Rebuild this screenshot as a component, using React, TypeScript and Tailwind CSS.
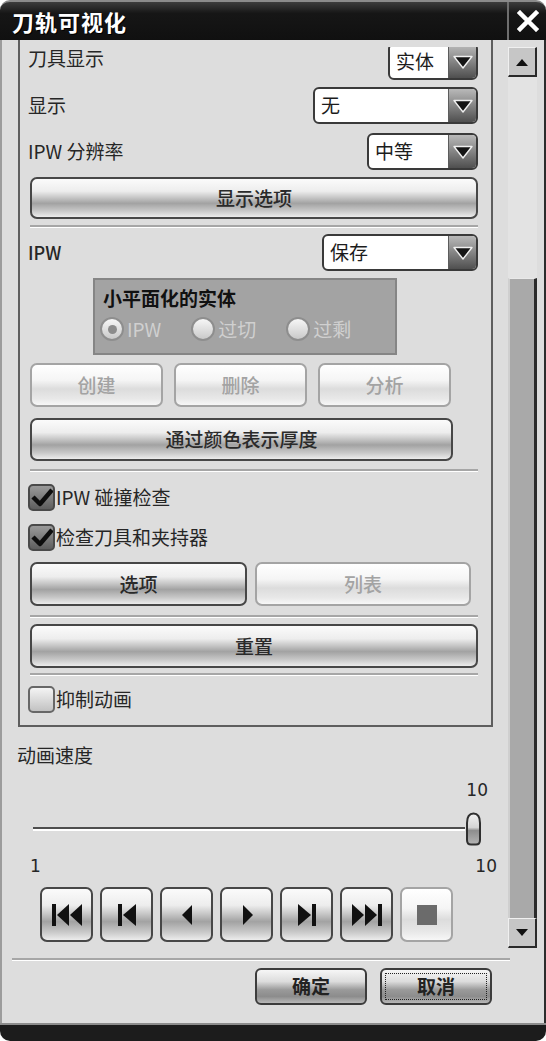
import clsx from 'clsx';

const cjk = "font-['Noto_Sans_CJK_SC',sans-serif]";

const glossOn =
  'border-[#474747] text-[#2a2a2a] bg-[linear-gradient(180deg,#fbfbfb_0%,#ededed_32%,#c4c4c4_50%,#a2a2a2_64%,#c8c8c8_84%,#ececec_100%)]';
const glossOff =
  'border-[#a4a4a4] text-[#a3a3a3] bg-[linear-gradient(180deg,#ffffff_0%,#f5f5f5_38%,#dcdcdc_60%,#e8e8e8_84%,#f7f7f7_100%)]';

function Btn({ label, disabled, className }: { label: string; disabled?: boolean; className?: string }) {
  return (
    <div
      className={clsx(
        'flex items-center justify-center rounded-[7px] border-2 text-[19px] font-medium',
        disabled ? glossOff : glossOn,
        className,
      )}
    >
      {label}
    </div>
  );
}

function Arrow() {
  return (
    <div className="flex w-[28px] items-center justify-center border-l border-[#5c5c5c] bg-[linear-gradient(180deg,#b9b9b9_0%,#8a8a8a_45%,#4f4f4f_100%)]">
      <svg width="22" height="16" viewBox="0 0 22 16">
        <path d="M2 2.5h18L11 14z" fill="#141414" stroke="#efefef" strokeWidth="1.4" strokeLinejoin="round" />
      </svg>
    </div>
  );
}

function Dropdown({ value, className }: { value: string; className?: string }) {
  return (
    <div className={clsx('flex h-[37px] overflow-hidden rounded-[6px] border-2 border-[#3a3a3a] bg-white', className)}>
      <div className="flex flex-1 items-center pl-[6px] text-[19px] text-[#1c1c1c]">{value}</div>
      <Arrow />
    </div>
  );
}

function Check({ checked, label, className }: { checked?: boolean; label: string; className?: string }) {
  return (
    <div className={clsx('flex h-[28px] items-center', className)}>
      <div
        className={clsx(
          'flex h-[27px] w-[27px] items-center justify-center rounded-[5px] border-2',
          checked
            ? 'border-[#4a4a4a] bg-[linear-gradient(180deg,#9a9a9a,#5e5e5e)]'
            : 'border-[#676767] bg-[linear-gradient(180deg,#f4f4f4,#c2c2c2)]',
        )}
      >
        {checked && (
          <svg width="22" height="20" viewBox="0 0 22 20">
            <path d="M2 10l7 7L21 3" fill="none" stroke="#0e0e0e" strokeWidth="4.5" strokeLinejoin="round" />
          </svg>
        )}
      </div>
      <span className="ml-[1px] text-[19px] text-[#262626]">{label}</span>
    </div>
  );
}

function Radio({ on, label }: { on?: boolean; label: string }) {
  return (
    <div className="flex items-center">
      <div className="flex h-[24px] w-[24px] items-center justify-center rounded-full border-2 border-[#8e8e8e] bg-[linear-gradient(180deg,#f7f7f7,#c9c9c9)]">
        {on && <div className="h-[9px] w-[9px] rounded-full bg-[#8c8c8c]" />}
      </div>
      <span className="ml-[3px] text-[19px] text-[#d0d0d0]">{label}</span>
    </div>
  );
}

function Sep({ className }: { className?: string }) {
  return <div className={clsx('h-[3px] border-t-2 border-[#a6a6a6] bg-white', className)} />;
}

function MediaIcon({ kind }: { kind: number }) {
  const f = '#111';
  return (
    <svg width="36" height="26" viewBox="0 0 36 26">
      {kind === 0 && (
        <>
          <rect x="3" y="2" width="4" height="22" fill={f} />
          <path d="M20 2v22L8 13z" fill={f} />
          <path d="M33 2v22L21 13z" fill={f} />
        </>
      )}
      {kind === 1 && (
        <>
          <rect x="9" y="2" width="4" height="22" fill={f} />
          <path d="M27 2v22L14 13z" fill={f} />
        </>
      )}
      {kind === 2 && <path d="M23 3v20L13 13z" fill={f} />}
      {kind === 3 && <path d="M14 3v20l10-10z" fill={f} />}
      {kind === 4 && (
        <>
          <path d="M9 2v22l13-11z" fill={f} />
          <rect x="23" y="2" width="4" height="22" fill={f} />
        </>
      )}
      {kind === 5 && (
        <>
          <path d="M3 2v22l12-11z" fill={f} />
          <path d="M16 2v22l12-11z" fill={f} />
          <rect x="29" y="2" width="4" height="22" fill={f} />
        </>
      )}
      {kind === 6 && <rect x="8" y="3" width="20" height="20" fill="#6b6b6b" />}
    </svg>
  );
}

export default function App() {
  return (
    <div className={clsx('flex h-[1041px] w-[546px] flex-col bg-white', cjk)}>
      {/* title bar */}
      <div className="flex h-[40px] shrink-0 items-center rounded-t-[10px] border-t-2 border-[#8a8a8a] bg-[linear-gradient(180deg,#3c3c3c_0%,#161616_30%,#101010_100%)]">
        <span className="ml-[12px] text-[22px] font-bold tracking-[1px] text-white [text-shadow:1px_1px_0_#000]">
          刀轨可视化
        </span>
        <div className="ml-auto flex h-full w-[39px] items-center justify-center border-l-2 border-[#6e6e6e]">
          <svg width="22" height="22" viewBox="0 0 22 22">
            <path d="M3 3l16 16M19 3L3 19" stroke="#fff" strokeWidth="4.5" strokeLinecap="square" />
          </svg>
        </div>
      </div>

      {/* body */}
      <div className="flex flex-1 flex-col border-l-2 border-r-2 border-l-[#9c9c9c] border-r-[#2c2c2c] bg-[#dddddd] text-[#262626]">
        <div className="flex h-[908px]">
          {/* left column */}
          <div className="flex w-[504px] flex-col">
            <div className="ml-[16px] flex w-[475px] flex-col border-b-2 border-l-2 border-r-2 border-[#5e5e5e] pb-[12px] pl-[8px] pr-[13px] text-[19px]">
              <div className="flex h-[40px] items-end justify-between">
                <span className="mb-[8px]">刀具显示</span>
                <div className="h-[33px] overflow-hidden">
                  <Dropdown value="实体" className="-mt-[4px] w-[90px]" />
                </div>
              </div>
              <div className="mt-[7px] flex items-center justify-between">
                <span>显示</span>
                <Dropdown value="无" className="w-[165px]" />
              </div>
              <div className="mt-[9px] flex items-center justify-between">
                <span>IPW 分辨率</span>
                <Dropdown value="中等" className="w-[111px]" />
              </div>
              <Btn label="显示选项" className="ml-[2px] mt-[7px] h-[42px]" />
              <Sep className="ml-[2px] mt-[6px]" />
              <div className="mt-[6px] flex items-center justify-between">
                <span className="text-[18px] font-medium">IPW</span>
                <Dropdown value="保存" className="w-[156px]" />
              </div>
              <div className="ml-[65px] mt-[7px] flex h-[77px] w-[304px] flex-col border-2 border-[#858585] bg-[#a3a3a3] pl-[5px]">
                <span className="ml-[3px] mt-[4px] text-[19px] font-bold leading-[28px] text-[#111]">小平面化的实体</span>
                <div className="mt-[3px] flex gap-[30px]">
                  <Radio on label="IPW" />
                  <Radio label="过切" />
                  <Radio label="过剩" />
                </div>
              </div>
              <div className="ml-[2px] mt-[8px] flex h-[44px] gap-[11px]">
                <Btn label="创建" disabled className="w-[133px]" />
                <Btn label="删除" disabled className="w-[133px]" />
                <Btn label="分析" disabled className="w-[133px]" />
              </div>
              <Btn label="通过颜色表示厚度" className="ml-[2px] mt-[11px] h-[43px] w-[423px]" />
              <Sep className="ml-[2px] mt-[8px]" />
              <Check checked label="IPW 碰撞检查" className="mt-[11px]" />
              <Check checked label="检查刀具和夹持器" className="mt-[12px]" />
              <div className="ml-[2px] mt-[11px] flex h-[44px] gap-[8px]">
                <Btn label="选项" className="w-[217px]" />
                <Btn label="列表" disabled className="w-[216px]" />
              </div>
              <Sep className="ml-[2px] mt-[9px]" />
              <Btn label="重置" className="ml-[2px] mt-[6px] h-[44px]" />
              <Sep className="ml-[2px] mt-[5px]" />
              <Check label="抑制动画" className="mt-[9px]" />
            </div>

            {/* animation speed */}
            <div className="ml-[15px] mt-[16px] h-[24px] text-[19px] leading-[24px]">动画速度</div>
            <div className="mt-[11px] flex h-[24px] justify-end pr-[18px] font-['DejaVu_Sans',sans-serif] text-[17px] leading-[24px]">
              10
            </div>
            <div className="ml-[31px] mt-[10px] flex h-[34px] items-center">
              <div className="h-[4px] w-[432px] border-t-2 border-[#4e4e4e] bg-white" />
              <svg width="17" height="34" viewBox="0 0 17 34">
                <defs>
                  <linearGradient id="th" x1="0" y1="0" x2="0" y2="1">
                    <stop offset="0" stopColor="#f2f2f2" />
                    <stop offset="0.45" stopColor="#d4d4d4" />
                    <stop offset="0.55" stopColor="#8d8d8d" />
                    <stop offset="1" stopColor="#b4b4b4" />
                  </linearGradient>
                </defs>
                <path
                  d="M2 11Q2 1.5 8.5 1.5Q15 1.5 15 11V28Q15 32.5 11 32.5H6Q2 32.5 2 28Z"
                  fill="url(#th)"
                  stroke="#2f2f2f"
                  strokeWidth="2"
                />
              </svg>
            </div>
            <div className="mt-[8px] flex h-[24px] justify-between pl-[28px] pr-[9px] font-['DejaVu_Sans',sans-serif] text-[17px] leading-[24px]">
              <span>1</span>
              <span>10</span>
            </div>
            <div className="ml-[38px] mt-[9px] flex h-[55px] gap-[7px]">
              {[0, 1, 2, 3, 4, 5, 6].map((k) => (
                <div
                  key={k}
                  className={clsx(
                    'flex w-[53px] items-center justify-center rounded-[7px] border-2',
                    k === 6 ? glossOff : glossOn,
                  )}
                >
                  <MediaIcon kind={k} />
                </div>
              ))}
            </div>
          </div>

          {/* scrollbar */}
          <div className="ml-[2px] flex w-[29px] flex-col pt-[7px]">
            <div className="flex h-[30px] items-center justify-center border-b-2 border-l border-r-2 border-t border-b-[#2a2a2a] border-l-[#f0f0f0] border-r-[#2a2a2a] border-t-[#f0f0f0] bg-[#c6c6c6]">
              <svg width="12" height="8" viewBox="0 0 12 8">
                <path d="M0 8L6 1l6 7z" fill="#111" />
              </svg>
            </div>
            <div className="h-[201px] bg-[#e3e3e3]" />
            <div className="h-[640px] border-l-2 border-r-[3px] border-t border-l-[#cfcfcf] border-r-[#2b2b2b] border-t-[#e9e9e9] bg-[#a9a9a9]" />
            <div className="flex h-[30px] items-center justify-center border-b-2 border-l border-r-2 border-t border-b-[#2a2a2a] border-l-[#f0f0f0] border-r-[#2a2a2a] border-t-[#f0f0f0] bg-[#c6c6c6]">
              <svg width="12" height="8" viewBox="0 0 12 8">
                <path d="M0 0L6 7l6-7z" fill="#111" />
              </svg>
            </div>
          </div>
        </div>

        <Sep className="ml-[10px] mt-[10px] w-[498px]" />

        <div className="ml-[253px] mt-[7px] flex h-[37px] gap-[13px]">
          <div className="flex w-[112px] items-center justify-center rounded-[6px] border-2 border-[#3c3c3c] bg-[linear-gradient(180deg,#f6f6f6_0%,#dcdcdc_35%,#9a9a9a_60%,#8c8c8c_80%,#b8b8b8_100%)] text-[19px] font-bold text-[#222]">
            确定
          </div>
          <div className="relative flex w-[112px] items-center justify-center rounded-[6px] border-2 border-[#3c3c3c] bg-[linear-gradient(180deg,#f6f6f6_0%,#dcdcdc_35%,#9a9a9a_60%,#8c8c8c_80%,#b8b8b8_100%)] text-[19px] font-bold text-[#222]">
            <div className="absolute inset-[3px] border border-dotted border-[#222]" />
            取消
          </div>
        </div>
      </div>

      {/* bottom bar */}
      <div className="h-[18px] shrink-0 rounded-b-[10px] border-t-2 border-[#8c8c8c] bg-[#1c1c1c]" />
    </div>
  );
}
